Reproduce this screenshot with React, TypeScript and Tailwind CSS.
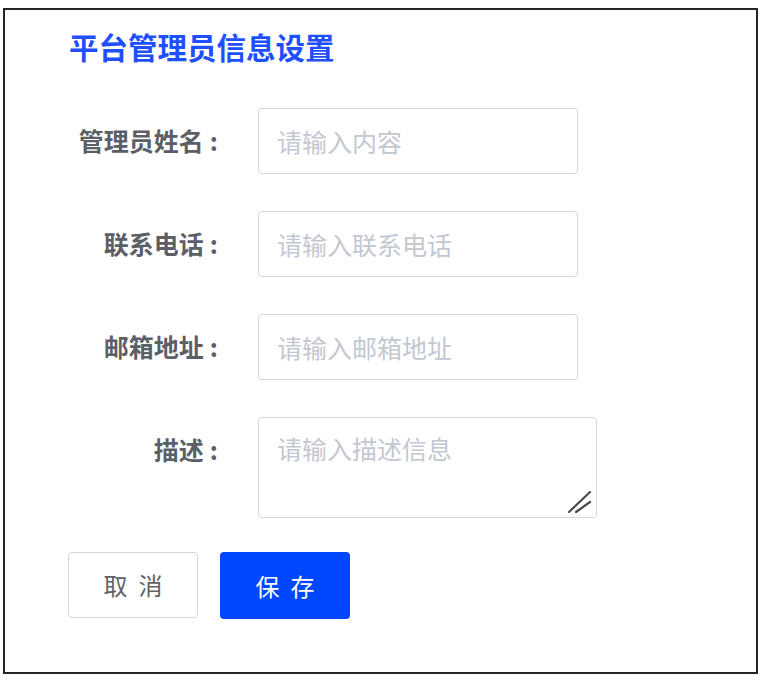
import { useState } from 'react'

const font = { fontFamily: '"Noto Sans CJK SC", "Noto Sans", sans-serif' }

export default function App() {
  const [form, setForm] = useState({ name: '', phone: '', email: '', desc: '' })

  function handleChange(field: string, value: string) {
    setForm((prev) => ({ ...prev, [field]: value }))
  }

  const labelCls = 'w-[151px] pr-[2px] text-right text-[25px] font-bold text-[#5b5f67]'
  const inputCls =
    'w-[320px] h-[66px] px-[18px] bg-white border border-[#d3d6dd] rounded-[4px] text-[25px] text-[#606266] placeholder:text-[#c3c7d0] focus:outline-none focus:border-[#0047ff]'

  return (
    <div className="w-[772px] h-[684px] bg-white pt-[8px] pl-[3px]" style={font}>
      <div className="w-[755px] h-[666px] border-2 border-[#262626] pl-[64px] pt-[18px]">
        {/* タイトル */}
        <h1 className="text-[29.5px] leading-[36px] font-bold text-[#1f4fff] mb-[44px]">平台管理员信息设置</h1>

        <form onSubmit={(e) => e.preventDefault()} className="flex flex-col gap-[37px]">
          <div className="flex items-center">
            <label className={labelCls}>
              管理员姓名<span className="ml-[6px]">:</span>
            </label>
            <input
              type="text"
              value={form.name}
              onChange={(e) => handleChange('name', e.target.value)}
              placeholder="请输入内容"
              className={`ml-[38px] ${inputCls}`}
            />
          </div>

          <div className="flex items-center">
            <label className={labelCls}>
              联系电话<span className="ml-[6px]">:</span>
            </label>
            <input
              type="tel"
              value={form.phone}
              onChange={(e) => handleChange('phone', e.target.value)}
              placeholder="请输入联系电话"
              className={`ml-[38px] ${inputCls}`}
            />
          </div>

          <div className="flex items-center">
            <label className={labelCls}>
              邮箱地址<span className="ml-[6px]">:</span>
            </label>
            <input
              type="email"
              value={form.email}
              onChange={(e) => handleChange('email', e.target.value)}
              placeholder="请输入邮箱地址"
              className={`ml-[38px] ${inputCls}`}
            />
          </div>

          {/* 描述 */}
          <div className="flex items-start">
            <label className={`${labelCls} h-[66px] flex items-center justify-end`}>
              描述<span className="ml-[6px]">:</span>
            </label>
            <div className="relative ml-[38px]">
              <textarea
                value={form.desc}
                onChange={(e) => handleChange('desc', e.target.value)}
                placeholder="请输入描述信息"
                className="block w-[339px] h-[101px] px-[18px] py-[12px] leading-[36px] resize-none bg-white border border-[#d3d6dd] rounded-[4px] text-[25px] text-[#606266] placeholder:text-[#c3c7d0] focus:outline-none focus:border-[#0047ff]"
              />
              {/* リサイズハンドル */}
              <svg
                className="absolute right-[5px] bottom-[5px] pointer-events-none"
                width="24"
                height="22"
                viewBox="0 0 24 22"
              >
                <line x1="1" y1="21" x2="22" y2="1" stroke="#4a4a4a" strokeWidth="2.2" strokeLinecap="round" />
                <line x1="8" y1="21" x2="22" y2="11" stroke="#4a4a4a" strokeWidth="2.2" strokeLinecap="round" />
              </svg>
            </div>
          </div>

          <div className="flex gap-[22px] -ml-[1px] mt-[-3px]">
            <button
              type="button"
              className="w-[130px] h-[66px] border border-[#d3d6dd] rounded-[4px] bg-white text-[24px] text-[#606266] flex items-center justify-center"
            >
              <span className="tracking-[11px] pl-[11px]">取消</span>
            </button>
            <button
              type="submit"
              className="w-[130px] h-[67px] rounded-[4px] bg-[#0047ff] text-[24px] text-white flex items-center justify-center"
            >
              <span className="tracking-[11px] pl-[11px]">保存</span>
            </button>
          </div>
        </form>
      </div>
    </div>
  )
}
